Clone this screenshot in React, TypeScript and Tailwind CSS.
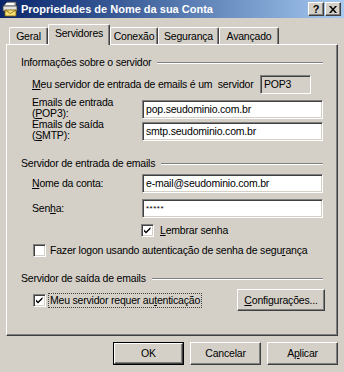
const FACE = "bg-[#d4d0c8]";

const sunken =
  "border border-t-[#808080] border-l-[#808080] border-b-white border-r-white shadow-[inset_1px_1px_0_#404040,inset_-1px_-1px_0_#d4d0c8]";

const raised =
  "border border-t-white border-l-white border-b-[#404040] border-r-[#404040] shadow-[inset_-1px_-1px_0_#808080]";

function U({ children }: { children: string }) {
  return <span className="underline underline-offset-[1px]">{children}</span>;
}

function Field({ value, className = "" }: { value: string; className?: string }) {
  return (
    <div
      className={`flex h-[19px] w-[181px] items-center bg-white px-[3px] text-black ${sunken} ${className}`}
    >
      {value}
    </div>
  );
}

function Check({ checked }: { checked?: boolean }) {
  return (
    <div className={`h-[13px] w-[13px] shrink-0 bg-white ${sunken}`}>
      {checked && (
        <svg width="11" height="11" viewBox="0 0 11 11" className="block">
          <path d="M2 4.5 L4 6.5 L8.5 2 L8.5 4 L4 8.5 L2 6.5 Z" fill="#000" />
        </svg>
      )}
    </div>
  );
}

function GroupTitle({ label, className = "" }: { label: string; className?: string }) {
  return (
    <div className={`flex items-center pl-[14px] pr-[14px] ${className}`}>
      <span className="leading-[13px]">{label}</span>
      <div className="ml-[6px] h-[2px] flex-1 border-t border-b border-t-[#808080] border-b-white" />
    </div>
  );
}

function Tab({ label, w, active }: { label: string; w: string; active?: boolean }) {
  return (
    <div
      className={`relative flex items-start justify-center rounded-t-[2px] border-l border-t border-r border-l-white border-t-white border-r-[#404040] shadow-[inset_-1px_0_0_#808080] ${FACE} ${w} ${
        active ? "z-10 -mb-px h-[21px] pt-[2px]" : "h-[17px] pt-[2px]"
      }`}
    >
      {label}
    </div>
  );
}

function Button({
  children,
  w = "w-[71px]",
  h = "h-[23px]",
  isDefault,
}: {
  children: React.ReactNode;
  w?: string;
  h?: string;
  isDefault?: boolean;
}) {
  const inner = (
    <div className={`flex h-full w-full items-center justify-center ${raised} ${FACE}`}>
      {children}
    </div>
  );
  if (isDefault) {
    return <div className={`border border-black ${h} ${w}`}>{inner}</div>;
  }
  return <div className={`${h} ${w}`}>{inner}</div>;
}

function TitleIcon() {
  return (
    <svg width="16" height="16" viewBox="0 0 16 16" className="shrink-0">
      <path d="M2 4 L5 1 L14 1 L14 6 L2 6 Z" fill="#c0c0c0" stroke="#404040" strokeWidth="0.8" />
      <rect x="1" y="5" width="14" height="5" fill="#e0e0e0" stroke="#404040" strokeWidth="0.8" />
      <rect x="3" y="9" width="11" height="6" fill="#f7e27a" stroke="#806000" strokeWidth="0.8" />
      <path d="M3 9 L8.5 12.5 L14 9" fill="none" stroke="#806000" strokeWidth="0.8" />
      <rect x="4" y="2" width="8" height="2" fill="#ffffff" />
    </svg>
  );
}

function CaptionButton({ children }: { children: React.ReactNode }) {
  return (
    <div
      className={`flex h-[14px] w-[16px] items-center justify-center ${raised} ${FACE} text-[11px] font-bold leading-none text-black`}
    >
      {children}
    </div>
  );
}

export default function App() {
  return (
    <div
      className={`h-[372px] w-[344px] overflow-hidden ${FACE} text-[10.5px] leading-[13px] tracking-[-0.2px] text-black`}
      style={{ fontFamily: '"Liberation Sans", Arial, sans-serif' }}
    >
      {/* title bar */}
      <div className="flex h-[18px] items-center bg-linear-to-r from-[#0a246a] to-[#a6caf0] pl-[2px] pr-[3px]">
        <TitleIcon />
        <span className="ml-[3px] flex-1 text-[11px] font-bold tracking-normal text-white">
          Propriedades de Nome da sua Conta
        </span>
        <div className="flex gap-[1px]">
          <CaptionButton>?</CaptionButton>
          <CaptionButton>
            <svg width="8" height="7" viewBox="0 0 8 7">
              <path d="M0 0 L2 0 L4 2.5 L6 0 L8 0 L5 3.5 L8 7 L6 7 L4 4.5 L2 7 L0 7 L3 3.5 Z" fill="#000" />
            </svg>
          </CaptionButton>
        </div>
      </div>

      {/* tabs */}
      <div className="mt-[6px] flex items-end pl-[9px]">
        <Tab label="Geral" w="w-[39px]" />
        <Tab label="Servidores" w="w-[62px]" active />
        <Tab label="Conexão" w="w-[48px]" />
        <Tab label="Segurança" w="w-[61px]" />
        <Tab label="Avançado" w="w-[60px]" />
      </div>

      {/* panel */}
      <div className="ml-[6px] h-[292px] w-[332px] border border-t-white border-l-white border-b-[#404040] border-r-[#404040] pt-[11px] shadow-[inset_-1px_-1px_0_#808080]">
        <GroupTitle label="Informações sobre o servidor" />

        <div className="mt-[6px] flex items-center pl-[25px]">
          <span className="w-[228px]">
            <U>M</U>eu servidor de entrada de emails é um&nbsp; servidor
          </span>
          <div className={`flex h-[19px] w-[51px] items-center px-[3px] ${sunken}`}>POP3</div>
        </div>

        <div className="mt-[3px] flex items-start pl-[25px]">
          <div className="w-[110px] leading-[11px]">
            Emails de entrada
            <br />
            (<U>P</U>OP3):
          </div>
          <Field value="pop.seudominio.com.br" className="mt-[3px]" />
        </div>

        <div className="flex items-start pl-[25px]">
          <div className="w-[110px] leading-[11px]">
            Emails de saída
            <br />
            (<U>S</U>MTP):
          </div>
          <Field value="smtp.seudominio.com.br" className="mt-[3px]" />
        </div>

        <GroupTitle label="Servidor de entrada de emails" className="mt-[16px]" />

        <div className="mt-[4px] flex items-center pl-[25px]">
          <span className="w-[110px]">
            <U>N</U>ome da conta:
          </span>
          <Field value="e-mail@seudominio.com.br" />
        </div>

        <div className="mt-[6px] flex items-center pl-[25px]">
          <span className="w-[110px]">
            Sen<U>h</U>a:
          </span>
          <Field value="*****" className="text-[8px] tracking-[0.5px] text-[#404040]" />
        </div>

        <div className="mt-[6px] flex items-center pl-[134px]">
          <Check checked />
          <span className="ml-[6px]">
            <U>L</U>embrar senha
          </span>
        </div>

        <div className="mt-[7px] flex items-center pl-[26px]">
          <Check />
          <span className="ml-[4px]">
            Fazer logon usando autenticação de senha de segu<U>r</U>ança
          </span>
        </div>

        <GroupTitle label="Servidor de saída de emails" className="mt-[15px]" />

        <div className="mt-[4px] flex items-center pl-[26px] pr-[12px]">
          <Check checked />
          <span className="ml-[3px] px-[1px] outline-1 outline-dotted outline-[#404040]">
            Meu servidor requer au<U>t</U>enticação
          </span>
          <div className="ml-auto">
            <Button w="w-[88px]" h="h-[22px]">
              <U>C</U>onfigurações...
            </Button>
          </div>
        </div>
      </div>

      {/* footer buttons */}
      <div className="mt-[6px] flex gap-[6px] pl-[113px]">
        <Button isDefault>OK</Button>
        <Button>Cancelar</Button>
        <Button>
          A<U>p</U>licar
        </Button>
      </div>
    </div>
  );
}
